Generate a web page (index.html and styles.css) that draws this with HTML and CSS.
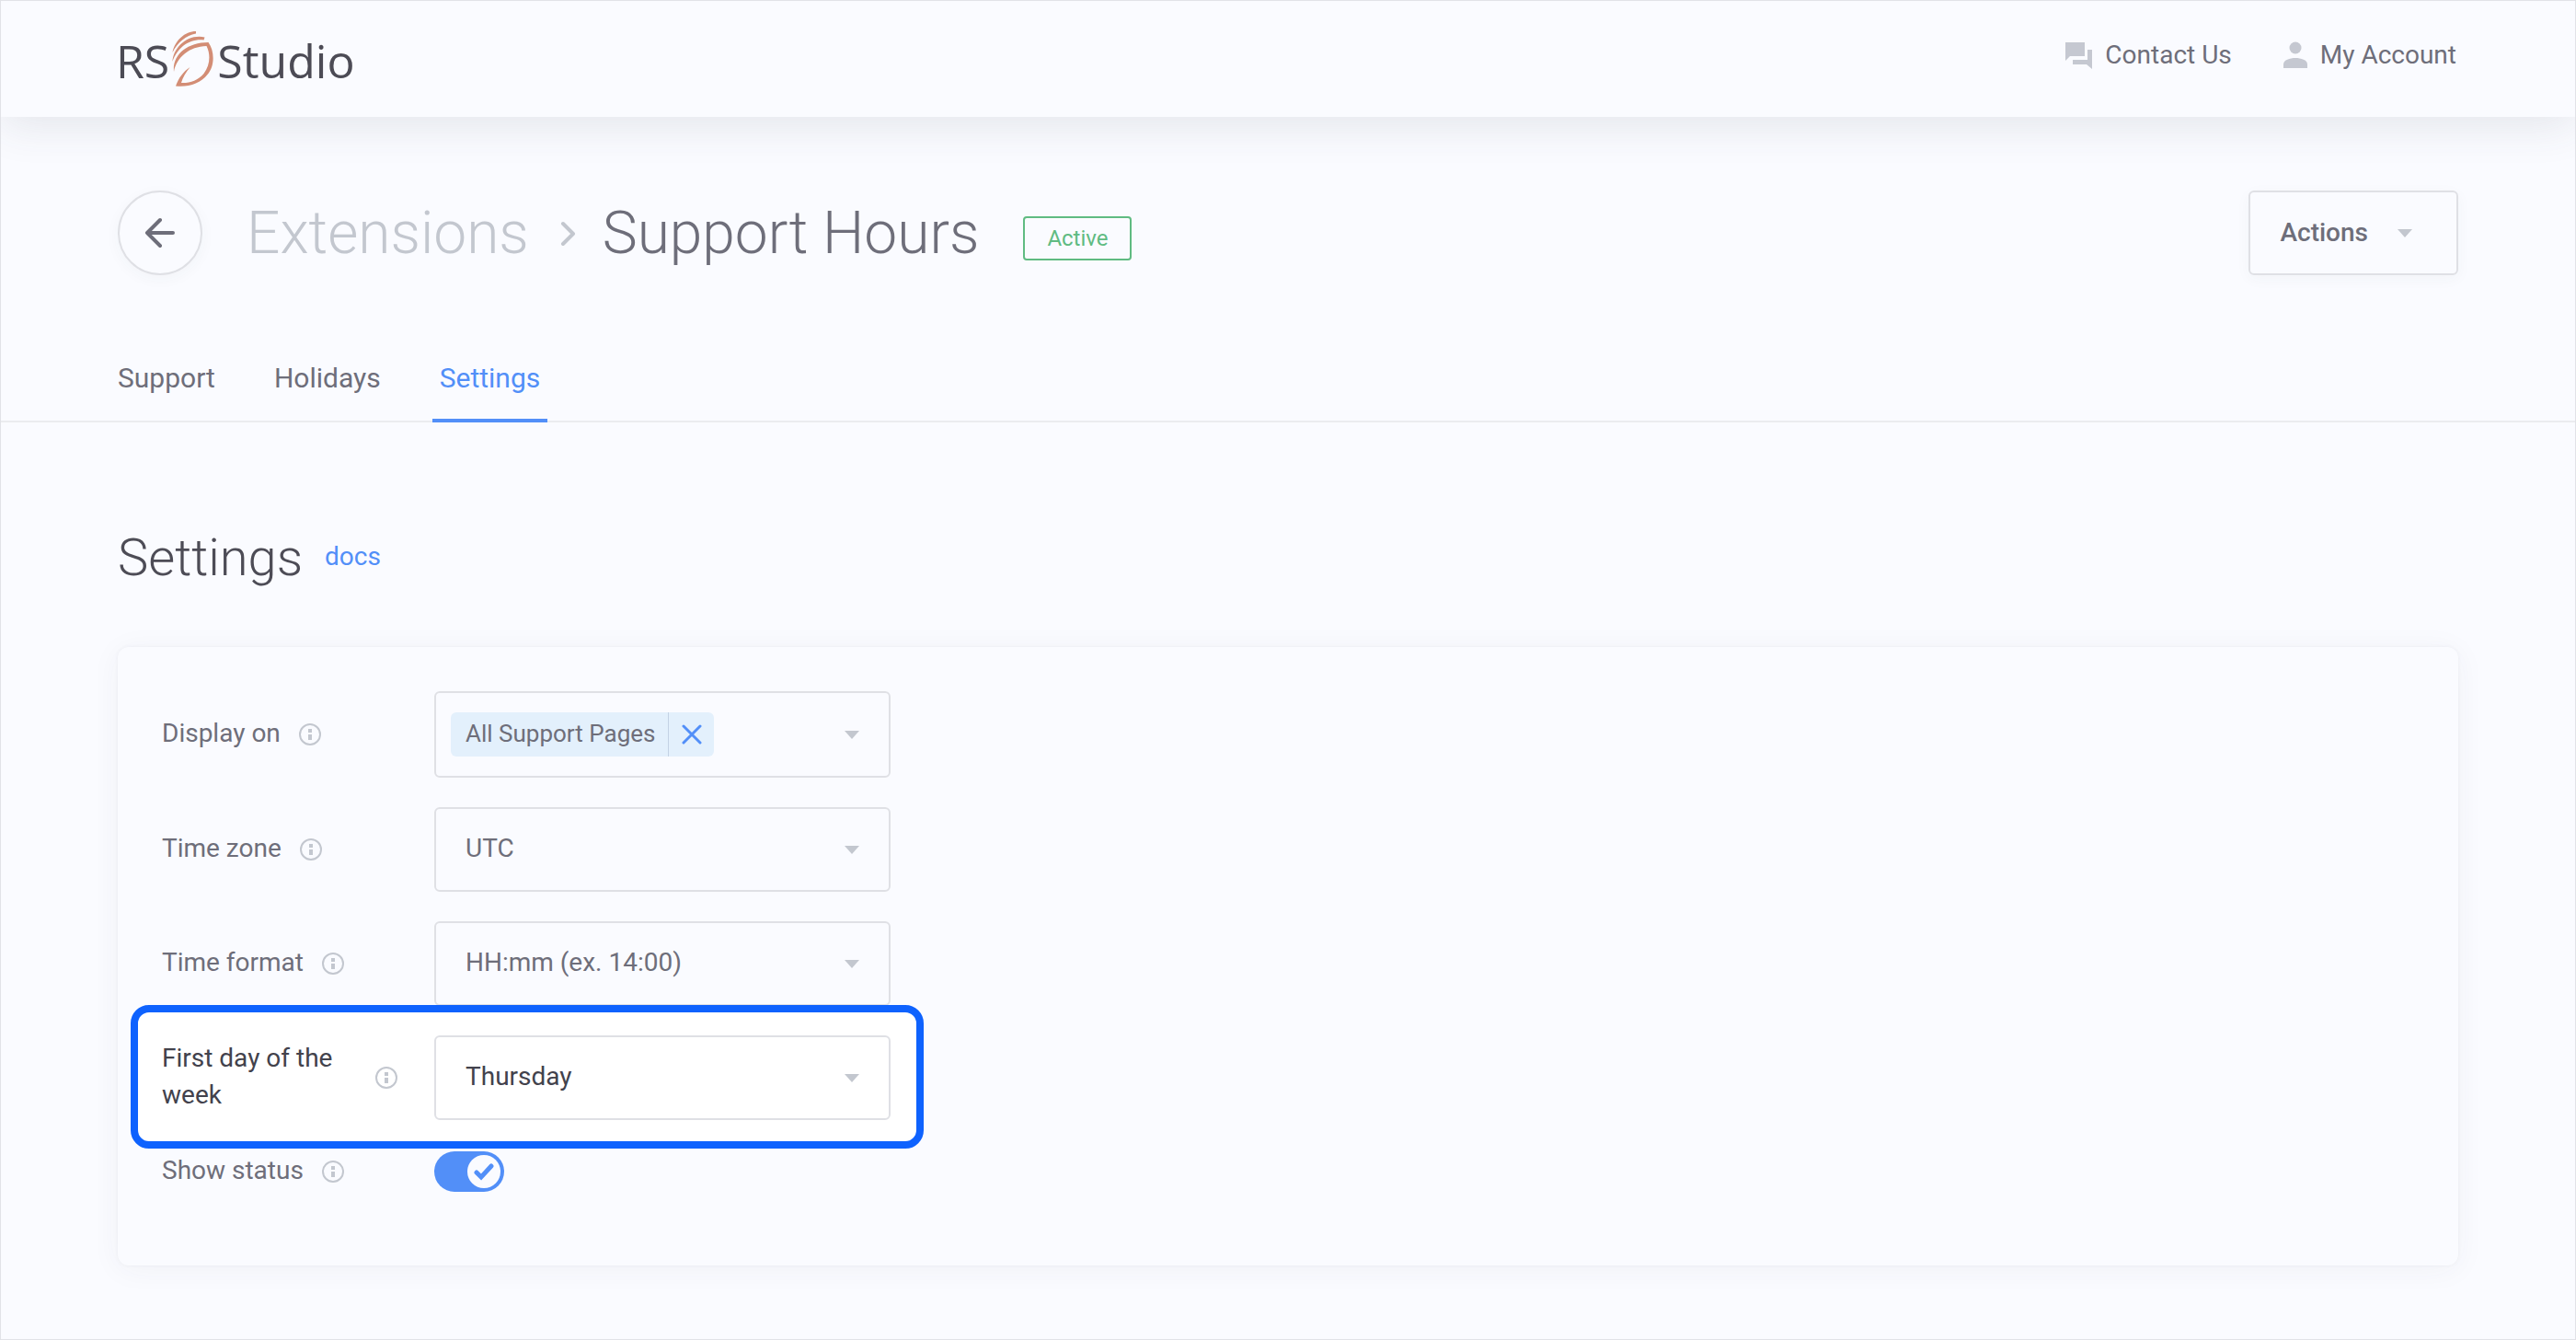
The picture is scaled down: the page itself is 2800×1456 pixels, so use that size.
FILE: index.html
```html
<!DOCTYPE html>
<html lang="en">
<head>
<meta charset="utf-8">
<title>Support Hours – Settings</title>
<link rel="stylesheet" href="styles.css">
</head>
<body>
<svg class="sprite" aria-hidden="true">
  <symbol id="info" viewBox="0 0 24 24">
    <circle cx="12" cy="12" r="11" fill="none" stroke="currentColor" stroke-width="2"/>
    <path d="M10 6h4v4h-4zM10 12h4v6h-4z" fill="currentColor"/>
  </symbol>
</svg>

<header class="topbar">
  <a class="logo" href="#" aria-label="RS Studio">
    <span>RS</span>
    <svg class="logo-leaf" viewBox="0 0 46 60" aria-hidden="true">
      <path d="M2 44C0 26 16 12 39.500 12C46 21 47 37 38.500 47C31 56.500 18 61 4 59.500C7 51 12 44 19.500 39C15 45 11.500 50 10 56C19 56.500 28 53.500 34.500 46C41.500 37 42 25 37.500 16C19 16.500 5 28 2 44z" fill="#d38d75"/>
      <g fill="#d38d75">
        <path d="M0.500 33C1 18 17 2.500 35.500 6.500L34.500 9.500C18 8 6 18 0.500 33z"/>
        <path d="M0.500 23C3 10 14 0 26 0V2.500C15 4.500 6 12 0.500 23z"/>
      </g>
    </svg>
    <span>Studio</span>
  </a>
  <nav class="topnav">
    <a href="#">
      <svg width="30" height="30" viewBox="0 0 30 30" aria-hidden="true"><path d="M1 1h21v15H6l-5 5zM25 9h5v21l-6-5H9v-5h16z" fill="currentColor"/></svg>
      Contact Us
    </a>
    <a href="#">
      <svg width="26" height="30" viewBox="0 0 26 30" aria-hidden="true"><circle cx="13" cy="7" r="6.500" fill="currentColor"/><path d="M0 29v-4c0-5 7-7 13-7s13 2 13 7v4z" fill="currentColor"/></svg>
      My Account
    </a>
  </nav>
</header>

<main>
  <div class="titlebar">
    <button class="back" aria-label="Back">
      <svg width="34" height="34" viewBox="0 0 34 34" aria-hidden="true"><path d="M17 3L3 17l14 14M3 17h28" fill="none" stroke="currentColor" stroke-width="4" stroke-linecap="round" stroke-linejoin="round"/></svg>
    </button>
    <h1 class="crumbs">
      <a href="#">Extensions</a>
      <svg width="22" height="28" viewBox="0 0 22 28" aria-hidden="true"><path d="M8 3l11 11L8 25" fill="none" stroke="currentColor" stroke-width="4" stroke-linecap="round" stroke-linejoin="round"/></svg>
      <span>Support Hours</span>
    </h1>
    <span class="badge">Active</span>
    <button class="actions">Actions <i class="caret"></i></button>
  </div>

  <nav class="tabs">
    <a href="#">Support</a>
    <a href="#">Holidays</a>
    <a href="#" class="current" aria-current="page">Settings</a>
  </nav>

  <section class="settings">
    <div class="heading">
      <h2>Settings</h2>
      <a href="#">docs</a>
    </div>

    <form class="card">
      <div class="row">
        <div class="label"><span id="display-label">Display on</span><svg class="info" aria-hidden="true"><use href="#info"/></svg></div>
        <div class="multi" role="group" aria-labelledby="display-label">
          <span class="tag">
            <span class="tag-name">All Support Pages</span>
            <button type="button" aria-label="Remove All Support Pages">
              <svg width="22" height="22" viewBox="0 0 22 22" aria-hidden="true"><path d="M2 2l18 18M20 2L2 20" fill="none" stroke="currentColor" stroke-width="3" stroke-linecap="round"/></svg>
            </button>
          </span>
          <i class="caret"></i>
        </div>
      </div>
      <div class="row">
        <div class="label"><label for="zone">Time zone</label><svg class="info" aria-hidden="true"><use href="#info"/></svg></div>
        <div class="picker"><select id="zone"><option>UTC</option></select><i class="caret"></i></div>
      </div>
      <div class="row">
        <div class="label"><label for="format">Time format</label><svg class="info" aria-hidden="true"><use href="#info"/></svg></div>
        <div class="picker"><select id="format"><option>HH:mm (ex. 14:00)</option></select><i class="caret"></i></div>
      </div>
      <div class="row highlight">
        <div class="label"><label for="day">First day of the week</label><svg class="info" aria-hidden="true"><use href="#info"/></svg></div>
        <div class="picker"><select id="day"><option>Thursday</option></select><i class="caret"></i></div>
      </div>
      <div class="row">
        <div class="label"><label for="status">Show status</label><svg class="info" aria-hidden="true"><use href="#info"/></svg></div>
        <div class="switch">
          <input type="checkbox" id="status" checked>
          <svg viewBox="0 0 36 36" aria-hidden="true"><circle cx="18" cy="18" r="18" fill="#fafbff"/><path d="M10 19l5 5L26 12" fill="none" stroke="#528ff8" stroke-width="5" stroke-linecap="round"/></svg>
        </div>
      </div>
    </form>
  </section>
</main>
</body>
</html>
```
FILE: styles.css
```css
*, *::before { box-sizing: border-box; }

body {
  margin: 0;
  min-height: 100vh;
  border: 1px solid #e1e2e7;
  background: #fafbff;
  color: #6e6e7a;
  font: 28px/40px Roboto, sans-serif;
}

a { color: inherit; text-decoration: none; }
button { font: inherit; color: inherit; background: none; cursor: pointer; }
h1, h2 { margin: 0; font-weight: 300; }
.sprite { display: none; }

/* Top bar */
.topbar {
  display: flex;
  justify-content: space-between;
  height: 126px;
  padding: 0 129px 0 125px;
  box-shadow: 0 8px 48px rgba(60, 64, 80, .12);
}
.logo {
  display: flex;
  align-items: center;
  gap: 3px;
  color: #4c4b55;
  font: 500 50px/60px "Open Sans", sans-serif;
}
.logo span { padding-top: 4px; }
.logo-leaf { width: 46px; height: 60px; }
.topnav { display: flex; align-items: center; gap: 56px; padding-bottom: 8px; }
.topnav a { display: flex; align-items: center; gap: 14px; }
.topnav svg { color: #c5c8d1; }

/* Title row */
.titlebar { display: flex; align-items: center; padding: 80px 127px 0; }
.back {
  display: grid;
  place-items: center;
  width: 92px;
  height: 92px;
  padding: 0;
  border: 2px solid #dfe0e5;
  border-radius: 50%;
  box-shadow: 0 4px 16px rgba(60, 64, 80, .04);
}
.crumbs {
  display: flex;
  align-items: center;
  gap: 29px;
  margin-left: 48px;
  font-size: 64px;
  line-height: 90px;
  padding-top: 2px;
}
.crumbs a, .crumbs svg { color: #c3c7cf; }
.badge {
  margin: 12px 0 0 48px;
  padding: 0 24px;
  border: 2px solid #60bb82;
  border-radius: 4px;
  color: #60bb82;
  font-size: 24px;
  line-height: 44px;
}
.actions {
  display: flex;
  align-items: center;
  gap: 32px;
  height: 92px;
  margin-left: auto;
  padding: 0 48px 0 32px;
  border: 2px solid #dfe0e5;
  border-radius: 6px;
  box-shadow: 0 4px 16px rgba(60, 64, 80, .04);
  font-weight: 500;
}
.caret {
  flex: none;
  border: 8px solid transparent;
  border-top: 9px solid #c3c7cf;
  border-bottom: 0;
}

/* Tabs */
.tabs {
  display: flex;
  gap: 48px;
  margin-top: 80px;
  padding: 0 119px;
  border-bottom: 2px solid #ebecef;
  font-size: 30px;
}
.tabs a { padding: 12px 8px 24px; border-bottom: 4px solid transparent; margin-bottom: -2px; }
.tabs .current { color: #528ff8; border-color: #528ff8; }

/* Settings */
.settings { padding: 108px 127px 76px; }
.heading { display: flex; align-items: center; gap: 24px; }
.heading h2 { color: #4d4c56; font-size: 56px; line-height: 78px; }
.heading a { padding-bottom: 2px; color: #528ff8; }
.card {
  display: flex;
  flex-direction: column;
  gap: 32px;
  margin-top: 58px;
  padding: 48px 48px 80px;
  border-radius: 12px;
  box-shadow: 0 0 4px rgba(60, 64, 80, .06), 0 4px 32px rgba(60, 64, 80, .05);
}
.row { position: relative; display: grid; grid-template-columns: 296px 496px; align-items: center; }
.highlight + .row { margin-top: 2px; }
.label { display: flex; align-items: center; gap: 20px; max-width: 256px; }
.label > :first-child { padding-bottom: 2px; }
.info { flex: none; width: 24px; height: 24px; color: #c3c7cf; }
.multi, .picker { position: relative; display: flex; align-items: center; }
.multi {
  justify-content: space-between;
  height: 94px;
  padding: 0 32px 0 16px;
  border: 2px solid #dfe0e5;
  border-radius: 6px;
}
.tag {
  display: flex;
  border-radius: 6px;
  background: #e3f0fc;
}
.tag-name { padding: 3px 14px 5px 16px; font-size: 26px; }
.tag button {
  display: grid;
  place-items: center;
  width: 50px;
  padding: 0;
  border: 0;
  border-left: 1px solid #c3d2e4;
  color: #528ff8;
}
.picker select {
  appearance: none;
  width: 100%;
  height: 92px;
  padding: 0 64px 2px 32px;
  border: 2px solid #dfe0e5;
  border-radius: 6px;
  background: none;
  color: inherit;
  font: inherit;
}
.picker .caret { position: absolute; right: 34px; }

/* The row being pointed out */
.highlight { z-index: 1; color: #42424c; }
.highlight::before {
  content: "";
  position: absolute;
  z-index: -1;
  top: -33px;
  bottom: -31px;
  left: -34px;
  width: 862px;
  border: 8px solid #0e62fe;
  border-radius: 20px;
  background: #fff;
}

/* Switch */
.switch { position: relative; width: 76px; height: 44px; }
.switch input {
  appearance: none;
  width: 100%;
  height: 100%;
  margin: 0;
  border-radius: 22px;
  background: #528ff8;
}
.switch svg { position: absolute; top: 4px; right: 4px; width: 36px; height: 36px; pointer-events: none; }
```
